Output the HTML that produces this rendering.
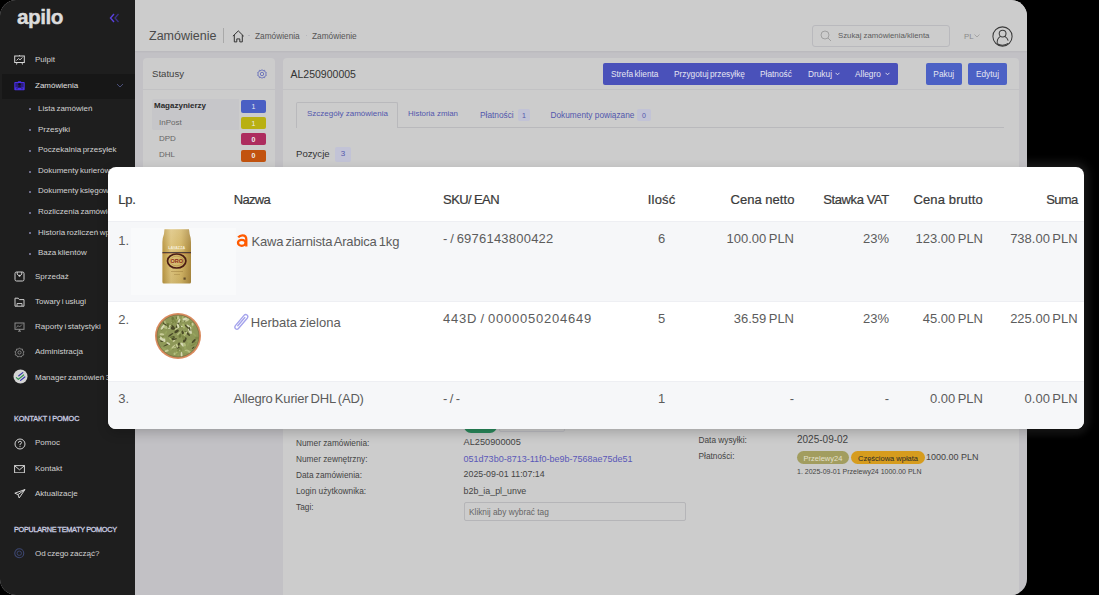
<!DOCTYPE html>
<html><head><meta charset="utf-8">
<style>
*{margin:0;padding:0;box-sizing:border-box}
html,body{width:1099px;height:595px;overflow:hidden;background:#000;font-family:"Liberation Sans",sans-serif}
.a{position:absolute}
.t{position:absolute;white-space:nowrap;line-height:1}
#frame{position:absolute;left:0;top:0;width:1027px;height:595px;border-radius:16px;overflow:hidden;background:#c2c1c5}
#side{position:absolute;left:0;top:0;width:135px;height:595px;background:#1e1e1e}
#side .t{color:#d2d2d2;font-size:8px;word-spacing:-0.7px}
#side .sub{left:38px}
#side .bul{position:absolute;left:29px;width:2px;height:2px;background:#6e6c8c}
#side .hd{color:#c9cce0;font-size:7.3px;left:14px;-webkit-text-stroke:0.3px #c9cce0;letter-spacing:-0.1px;word-spacing:-0.3px}
#head{position:absolute;left:135px;top:0;width:892px;height:50.5px;background:#cccccc;box-shadow:0 1px 1.5px rgba(0,0,0,0.05)}
.panel{position:absolute;background:#cccccc;border-radius:4px}
#card{position:absolute;left:108px;top:167px;width:976px;height:262px;border-radius:8px;overflow:hidden;background:#fff;box-shadow:0 4px 12px rgba(0,0,0,.2)}
#card .row{position:absolute;left:0;width:976px}
#card .th{position:absolute;white-space:nowrap;line-height:1;font-size:13px;color:#3a3a3a;-webkit-text-stroke:0.22px #3a3a3a;letter-spacing:-0.2px}
#card .td{position:absolute;white-space:nowrap;line-height:1;font-size:13px;color:#5c5c5c;letter-spacing:0;word-spacing:-1.2px}
.r{text-align:right}
</style></head><body>
<div id="frame">
  <div id="side">
    <div class="t" style="left:17px;top:6.8px;font-size:20.8px;font-weight:bold;color:#dcdcdc;letter-spacing:-0.5px;-webkit-text-stroke:0.4px #dcdcdc">apilo</div>
    <svg class="a" style="left:109px;top:13px" width="11" height="10" viewBox="0 0 11 10"><path d="M5 1 L1.5 5 L5 9" fill="none" stroke="#5a40e0" stroke-width="1.4"/><path d="M9.5 1 L6 5 L9.5 9" fill="none" stroke="#3a3188" stroke-width="1.3"/></svg>
    <!-- Pulpit -->
    <svg class="a" style="left:14px;top:55px" width="11" height="10" viewBox="0 0 11 10"><rect x="0.7" y="1" width="9.6" height="6.5" fill="none" stroke="#d8d8d8" stroke-width="1"/><path d="M2.5 5.5 L4.5 3.5 L6 4.8 L8.5 2.5" fill="none" stroke="#d8d8d8" stroke-width="0.9"/><path d="M3 7.5 L2.5 9.5 M8 7.5 L8.5 9.5 M5.5 0 V1" stroke="#d8d8d8" stroke-width="0.9"/></svg>
    <div class="t" style="left:35px;top:55.8px">Pulpit</div>
    <div class="a" style="left:2px;top:73.7px;width:133px;height:25px;background:#171717"></div>
    <svg class="a" style="left:14px;top:81px" width="11" height="9.5" viewBox="0 0 11 9.5"><rect x="0.3" y="1" width="10.4" height="8.3" rx="0.8" fill="#4a30e6"/><rect x="1.3" y="2" width="8.4" height="4.4" fill="#2a1c80"/><circle cx="5.5" cy="3.4" r="1.3" fill="#101010"/><path d="M3.3 6.6 Q5.5 3.8 7.7 6.6 Z" fill="#101010"/><rect x="3.8" y="0.2" width="3.4" height="1.3" rx="0.5" fill="#4a30e6"/><rect x="2" y="7.4" width="2" height="0.8" fill="#2a1c80"/><rect x="7" y="7.4" width="2" height="0.8" fill="#2a1c80"/></svg>
    <div class="t" style="left:35px;top:81.5px;color:#e0e0e0">Zamówienia</div>
    <svg class="a" style="left:116px;top:83px" width="8" height="5" viewBox="0 0 8 5"><path d="M1 1 L4 4 L7 1" fill="none" stroke="#4a4f7a" stroke-width="1"/></svg>
    <div class="bul" style="top:108px"></div><div class="t sub" style="top:104.7px">Lista zamówień</div>
    <div class="bul" style="top:129px"></div><div class="t sub" style="top:125.5px">Przesyłki</div>
    <div class="bul" style="top:150px"></div><div class="t sub" style="top:146.4px">Poczekalnia przesyłek</div>
    <div class="bul" style="top:170.5px"></div><div class="t sub" style="top:167.1px">Dokumenty kurierów</div>
    <div class="bul" style="top:191px"></div><div class="t sub" style="top:187.4px">Dokumenty księgowe</div>
    <div class="bul" style="top:211.5px"></div><div class="t sub" style="top:208.1px">Rozliczenia zamówień</div>
    <div class="bul" style="top:232px"></div><div class="t sub" style="top:228.7px">Historia rozliczeń wpłat</div>
    <div class="bul" style="top:253px"></div><div class="t sub" style="top:249.4px">Baza klientów</div>
    <!-- icons -->
    <svg class="a" style="left:14px;top:271px" width="11" height="11" viewBox="0 0 11 11"><path d="M1 2.5 Q1 1 2.5 1 H8.5 Q10 1 10 2.5 V8.5 Q10 10 8.5 10 H2.5 Q1 10 1 8.5 Z" fill="none" stroke="#cfcfcf" stroke-width="1"/><path d="M3.2 1 V3 Q5.5 6.6 7.8 3 V1" fill="none" stroke="#cfcfcf" stroke-width="1"/><circle cx="5.5" cy="4.8" r="1" fill="#cfcfcf"/></svg>
    <svg class="a" style="left:14px;top:297px" width="11" height="10" viewBox="0 0 11 10"><path d="M1 1.2 H4.2 L5.4 2.6 H10 V9.2 H1 Z" fill="none" stroke="#cfcfcf" stroke-width="1"/><path d="M3 9 V6.5 H8 V9" fill="none" stroke="#cfcfcf" stroke-width="0.9"/></svg>
    <svg class="a" style="left:14px;top:321.5px" width="11" height="10" viewBox="0 0 11 10"><rect x="1" y="1" width="9" height="6.3" fill="none" stroke="#8c8c8c" stroke-width="1"/><path d="M2.5 5.5 L4 3.5 L5.5 5 L8 2.5" fill="none" stroke="#8c8c8c" stroke-width="0.8"/><path d="M4 9.2 H7 M5.5 7.3 V9" stroke="#8c8c8c" stroke-width="1"/></svg>
    <svg class="a" style="left:14px;top:346.5px" width="11" height="11" viewBox="0 0 11 11"><circle cx="5.5" cy="5.5" r="1.6" fill="none" stroke="#8a8a8a" stroke-width="0.9"/><path d="M5.5 0.8 L6.6 2.2 L8.4 2 L8.6 3.8 L10.1 4.7 L9.2 6.2 L9.8 7.9 L8.1 8.4 L7.3 10 L5.5 9.3 L3.7 10 L2.9 8.4 L1.2 7.9 L1.8 6.2 L0.9 4.7 L2.4 3.8 L2.6 2 L4.4 2.2 Z" fill="none" stroke="#8a8a8a" stroke-width="0.9"/></svg>
    <svg class="a" style="left:12.6px;top:369px" width="15" height="15" viewBox="0 0 15 15"><circle cx="7.5" cy="7.5" r="7" fill="#d4d4d4"/><path d="M5.8 6.8 L9.8 3.6" fill="none" stroke="#3436a8" stroke-width="1.2" stroke-linecap="round"/><path d="M3.4 8.6 L5.3 10.4 L10.6 6" fill="none" stroke="#2f8f50" stroke-width="1.2" stroke-linecap="round" stroke-linejoin="round"/><path d="M7.6 11.4 L11.8 8" fill="none" stroke="#3436a8" stroke-width="1.2" stroke-linecap="round"/></svg>
    <svg class="a" style="left:13.5px;top:438px" width="12" height="12" viewBox="0 0 12 12"><circle cx="6" cy="6" r="5" fill="none" stroke="#d2d2d2" stroke-width="1"/><path d="M4.4 4.8 Q4.4 3.2 6 3.2 Q7.6 3.2 7.6 4.6 Q7.6 5.6 6 6.2 V7.2" fill="none" stroke="#d2d2d2" stroke-width="1"/><circle cx="6" cy="8.6" r="0.6" fill="#d2d2d2"/></svg>
    <svg class="a" style="left:14px;top:464.5px" width="11" height="8.5" viewBox="0 0 11 8.5"><rect x="0.6" y="0.6" width="9.8" height="7.2" fill="none" stroke="#d2d2d2" stroke-width="1"/><path d="M0.8 0.9 L5.5 4.8 L10.2 0.9" fill="none" stroke="#d2d2d2" stroke-width="1"/></svg>
    <svg class="a" style="left:14px;top:488.5px" width="11.5" height="9.5" viewBox="0 0 11.5 9.5"><path d="M11 0.5 L0.8 4.2 L4 5.6 L5.2 9 L11 0.5 Z M4 5.6 L11 0.5" fill="none" stroke="#d2d2d2" stroke-width="1" stroke-linejoin="round"/></svg>
    <svg class="a" style="left:14px;top:548.3px" width="10.5" height="10.5" viewBox="0 0 10.5 10.5"><circle cx="5.25" cy="5.25" r="4.5" fill="none" stroke="#3c4670" stroke-width="1.1"/><circle cx="5.25" cy="5.25" r="2.2" fill="none" stroke="#3c4670" stroke-width="1"/></svg>
    <div class="t" style="left:35px;top:272.5px">Sprzedaż</div>
    <div class="t" style="left:35px;top:298px">Towary i usługi</div>
    <div class="t" style="left:35px;top:322.8px">Raporty i statystyki</div>
    <div class="t" style="left:35px;top:348px">Administracja</div>
    <div class="t" style="left:35px;top:373.6px">Manager zamówień 3</div>
    <div class="t hd" style="top:415.1px">KONTAKT I POMOC</div>
    <div class="t" style="left:35px;top:439.3px">Pomoc</div>
    <div class="t" style="left:35px;top:464.7px">Kontakt</div>
    <div class="t" style="left:35px;top:489.9px">Aktualizacje</div>
    <div class="t hd" style="top:525.5px;letter-spacing:-0.3px">POPULARNE TEMATY POMOCY</div>
    <div class="t" style="left:35px;top:549.8px">Od czego zacząć?</div>
  </div>
  <div id="head">
    <div class="t" style="left:14px;top:30.2px;font-size:12.5px;color:#4a4a4a">Zamówienie</div>
    <div class="a" style="left:88px;top:28px;width:1px;height:15px;background:#a9a9a9"></div>
    <svg class="a" style="left:97px;top:29.5px" width="13" height="13" viewBox="0 0 13 13"><path d="M0.9 6.2 L6.3 0.9 L11.7 6.2 M2.3 5 V11.9 H4.8 V8.9 H7.8 V11.9 H10.3 V5" fill="none" stroke="#333" stroke-width="1" stroke-linejoin="miter"/></svg>
    <div class="a" style="left:113.3px;top:34.6px;width:1.8px;height:1.8px;border-radius:1px;background:#b0b0b8"></div>
    <div class="t" style="left:120px;top:32.3px;font-size:8.3px;color:#555">Zamówienia</div>
    <div class="a" style="left:170.6px;top:34.6px;width:1.8px;height:1.8px;border-radius:1px;background:#b0b0b8"></div>
    <div class="t" style="left:177px;top:32.3px;font-size:8.3px;color:#555">Zamówienie</div>
    <div class="a" style="left:677px;top:25px;width:138px;height:22px;border:1px solid #b9b9bd;border-radius:3px"></div>
    <svg class="a" style="left:685px;top:30px" width="12" height="12" viewBox="0 0 12 12"><circle cx="5" cy="5" r="4" fill="none" stroke="#9a9a9a" stroke-width="0.9"/><path d="M8 8 L11 11" stroke="#9a9a9a" stroke-width="0.9"/></svg>
    <div class="t" style="left:703px;top:32.3px;font-size:7.8px;color:#5c5c5c">Szukaj zamówienia/klienta</div>
    <div class="t" style="left:829px;top:32.5px;font-size:7.8px;color:#8a8a8a">PL</div>
    <svg class="a" style="left:839px;top:34.3px" width="6" height="4" viewBox="0 0 6 4"><path d="M0.5 0.5 L3 3 L5.5 0.5" fill="none" stroke="#9a9a9a" stroke-width="0.8"/></svg>
    <svg class="a" style="left:857px;top:26px" width="21" height="21" viewBox="0 0 21 21"><circle cx="10.5" cy="10.5" r="9.6" fill="none" stroke="#3a3a3a" stroke-width="1.05"/><circle cx="10.6" cy="7.6" r="3.4" fill="none" stroke="#3a3a3a" stroke-width="1.05"/><path d="M5.2 17.8 Q4.6 12.8 8.4 10.4 M12.8 10.4 Q15.6 12.3 16.2 14.6" fill="none" stroke="#3a3a3a" stroke-width="1.05"/><path d="M5.2 17.8 Q10.5 21 16.2 17.4" fill="none" stroke="#3a3a3a" stroke-width="1.05"/></svg>
  </div>
  <!-- statusy panel -->
  <div class="panel" style="left:143px;top:58px;width:132px;height:140px">
    <div class="a" style="left:0;top:31px;width:132px;height:1px;background:#c2c2c4"></div>
    <div class="t" style="left:9px;top:10.5px;font-size:9.6px;color:#3f3f3f">Statusy</div>
    <svg class="a" style="left:114px;top:11px" width="10" height="10" viewBox="0 0 10 10"><circle cx="5" cy="5" r="1.7" fill="none" stroke="#5a63b8" stroke-width="0.8"/><path d="M5 0.6 L6 1.8 L7.6 1.3 L7.9 2.9 L9.4 3.6 L8.7 5 L9.4 6.4 L7.9 7.1 L7.6 8.7 L6 8.2 L5 9.4 L4 8.2 L2.4 8.7 L2.1 7.1 L0.6 6.4 L1.3 5 L0.6 3.6 L2.1 2.9 L2.4 1.3 L4 1.8 Z" fill="none" stroke="#5a63b8" stroke-width="0.8"/></svg>
    <div class="a" style="left:9px;top:41.3px;width:87px;height:31px;background:#c6c6c9;border-radius:2px 0 0 2px"></div>
    <div class="t" style="left:11px;top:44px;font-size:8px;font-weight:bold;color:#2a2a2a">Magazynierzy</div>
    <div class="a" style="left:98px;top:42px;width:25px;height:12.5px;background:#4a5fc4;border-radius:2px"></div>
    <div class="t" style="left:98px;top:45px;width:25px;text-align:center;font-size:7px;color:#e8e8ee">1</div>
    <div class="t" style="left:16px;top:60.5px;font-size:8px;color:#666">InPost</div>
    <div class="a" style="left:98px;top:59px;width:25px;height:12px;background:#b9b012;border-radius:2px"></div>
    <div class="t" style="left:98px;top:61.5px;width:25px;text-align:center;font-size:7px;color:#eee">1</div>
    <div class="t" style="left:16px;top:76.5px;font-size:8px;color:#666">DPD</div>
    <div class="a" style="left:98px;top:75px;width:25px;height:12px;background:#ad2c5e;border-radius:2px"></div>
    <div class="t" style="left:98px;top:77.5px;width:25px;text-align:center;font-size:7px;font-weight:bold;color:#eee">0</div>
    <div class="t" style="left:16px;top:93px;font-size:8px;color:#666">DHL</div>
    <div class="a" style="left:98px;top:91.8px;width:25px;height:12px;background:#c2530f;border-radius:2px"></div>
    <div class="t" style="left:98px;top:94.3px;width:25px;text-align:center;font-size:7px;font-weight:bold;color:#eee">0</div>
  </div>
  <!-- main panel -->
  <div class="panel" style="left:283px;top:58px;width:736px;height:560px">
    <div class="a" style="left:0;top:31px;width:736px;height:1px;background:#c2c2c4"></div>
    <div class="t" style="left:7.5px;top:10.5px;font-size:10.5px;color:#333">AL250900005</div>
    <div class="a" style="left:320px;top:5px;width:294.5px;height:21.5px;background:#4a51ba;border-radius:2px"></div>
    <div class="t" style="left:328px;top:11.8px;font-size:8.3px;color:#e6e6f2;word-spacing:-1px">Strefa klienta</div>
    <div class="t" style="left:391px;top:11.8px;font-size:8.3px;color:#e6e6f2;word-spacing:-1px">Przygotuj przesyłkę</div>
    <div class="t" style="left:477px;top:11.8px;font-size:8.3px;color:#e6e6f2">Płatność</div>
    <div class="t" style="left:525px;top:11.8px;font-size:8.3px;color:#e6e6f2">Drukuj</div>
    <svg class="a" style="left:552px;top:14px" width="5" height="4" viewBox="0 0 5 4"><path d="M0.5 0.8 L2.5 2.8 L4.5 0.8" fill="none" stroke="#e6e6f2" stroke-width="0.9"/></svg>
    <div class="t" style="left:572px;top:11.8px;font-size:8.3px;color:#e6e6f2">Allegro</div>
    <svg class="a" style="left:602px;top:14px" width="5" height="4" viewBox="0 0 5 4"><path d="M0.5 0.8 L2.5 2.8 L4.5 0.8" fill="none" stroke="#e6e6f2" stroke-width="0.9"/></svg>
    <div class="a" style="left:643px;top:5px;width:35.5px;height:21.5px;background:#4c61c5;border-radius:2px"></div>
    <div class="t" style="left:643px;top:11.8px;width:35.5px;text-align:center;font-size:8.3px;color:#e6e6f2">Pakuj</div>
    <div class="a" style="left:685px;top:5px;width:39px;height:21.5px;background:#4c61c5;border-radius:2px"></div>
    <div class="t" style="left:685px;top:11.8px;width:39px;text-align:center;font-size:8.3px;color:#e6e6f2">Edytuj</div>
    <!-- tabs -->
    <div class="a" style="left:13px;top:69px;width:708px;height:1px;background:#b9b9bc"></div>
    <div class="a" style="left:13px;top:44px;width:102px;height:26px;border:1px solid #b9b9bc;border-bottom:none;background:#cccccc;border-radius:2px 2px 0 0"></div>
    <div class="t" style="left:24px;top:51.5px;font-size:8px;color:#5257ad">Szczegóły zamówienia</div>
    <div class="t" style="left:125px;top:51.5px;font-size:7.9px;color:#5257ad">Historia zmian</div>
    <div class="t" style="left:197px;top:52.5px;font-size:8.3px;color:#5257ad">Płatności</div>
    <div class="a" style="left:235px;top:51px;width:12px;height:12px;background:#c2c3d6;border-radius:2px"></div>
    <div class="t" style="left:235px;top:53.5px;width:12px;text-align:center;font-size:7px;color:#5257ad">1</div>
    <div class="t" style="left:267.5px;top:52.5px;font-size:8.3px;color:#5257ad">Dokumenty powiązane</div>
    <div class="a" style="left:354px;top:51px;width:14px;height:12px;background:#c2c3d6;border-radius:2px"></div>
    <div class="t" style="left:354px;top:53.5px;width:14px;text-align:center;font-size:7px;color:#5257ad">0</div>
    <div class="t" style="left:13px;top:91px;font-size:9.6px;color:#333">Pozycje</div>
    <div class="a" style="left:52px;top:88.7px;width:16px;height:15px;background:#c2c3d6;border-radius:2px"></div>
    <div class="t" style="left:52px;top:92px;width:16px;text-align:center;font-size:8px;color:#5257ad">3</div>
    <!-- detail lower -->
    <div class="a" style="left:181px;top:361px;width:33px;height:14px;background:#2a8a5c;border-radius:7px"></div>
    <div class="a" style="left:216px;top:360px;width:66px;height:14px;border:1px solid #bdbdc2;border-radius:2px"></div>
    <div class="t" style="left:13px;top:380.5px;font-size:8.3px;color:#444">Numer zamówienia:</div>
    <div class="t" style="left:13px;top:396.5px;font-size:8.3px;color:#444">Numer zewnętrzny:</div>
    <div class="t" style="left:13px;top:412.5px;font-size:8.3px;color:#444">Data zamówienia:</div>
    <div class="t" style="left:13px;top:429px;font-size:8.3px;color:#444">Login użytkownika:</div>
    <div class="t" style="left:13px;top:444.5px;font-size:8.3px;color:#444">Tagi:</div>
    <div class="t" style="left:180.6px;top:380px;font-size:9.2px;color:#444">AL250900005</div>
    <div class="t" style="left:180.6px;top:396.5px;font-size:9px;color:#5a58b8">051d73b0-8713-11f0-be9b-7568ae75de51</div>
    <div class="t" style="left:180.6px;top:412px;font-size:8.8px;color:#444">2025-09-01 11:07:14</div>
    <div class="t" style="left:180.6px;top:428.5px;font-size:8.9px;color:#444">b2b_ia_pl_unve</div>
    <div class="a" style="left:180.6px;top:444.3px;width:222px;height:18.5px;border:1px solid #b5b5b8;border-radius:2px"></div>
    <div class="t" style="left:186px;top:449.5px;font-size:8.3px;color:#666">Kliknij aby wybrać tag</div>
    <div class="t" style="left:415.5px;top:378px;font-size:8.3px;color:#444">Data wysyłki:</div>
    <div class="t" style="left:415.5px;top:394px;font-size:8.3px;color:#444">Płatności:</div>
    <div class="t" style="left:514px;top:377px;font-size:10px;color:#444">2025-09-02</div>
    <div class="a" style="left:514px;top:393.2px;width:52px;height:13.3px;background:#a29d5f;border-radius:7px"></div>
    <div class="t" style="left:514px;top:396.5px;width:52px;text-align:center;font-size:7.5px;color:#e2e0cc">Przelewy24</div>
    <div class="a" style="left:568px;top:393.2px;width:74px;height:13.3px;background:#d69c1e;border-radius:7px"></div>
    <div class="t" style="left:568px;top:396.5px;width:74px;text-align:center;font-size:7.5px;color:#2a2a2a">Częściowa wpłata</div>
    <div class="t" style="left:643px;top:394.5px;font-size:9px;color:#444">1000.00 PLN</div>
    <div class="t" style="left:514px;top:409.5px;font-size:7px;color:#444">1. 2025-09-01 Przelewy24 1000.00 PLN</div>
  </div>

</div>
<div class="a" style="left:1027px;top:0;width:72px;height:595px;overflow:hidden"><div class="a" style="left:-919px;top:167px;width:976px;height:262px;border-radius:8px;box-shadow:0 0 9px 5px rgba(50,50,50,0.5)"></div></div>
<div id="card">
  <div class="row" style="top:54.3px;height:1px;background:#eeeff3"></div><div class="row" style="top:55.3px;height:78.5px;background:#f6f7f9"></div><div class="row" style="top:133.6px;height:1px;background:#eeeff3"></div>
  <div class="row" style="top:214.3px;height:1px;background:#eeeff3"></div><div class="row" style="top:215.3px;height:47px;background:#f6f7f9"></div>
  <div class="th" style="left:10.2px;top:26.1px">Lp.</div>
  <div class="th" style="left:125.8px;top:26.1px;letter-spacing:-0.7px">Nazwa</div>
  <div class="th" style="left:335.1px;top:26.1px;letter-spacing:-0.6px">SKU/ EAN</div>
  <div class="th" style="left:539.8px;top:26.1px;letter-spacing:0.17px">Ilość</div>
  <div class="th r" style="right:289.6px;top:26.1px;letter-spacing:0.03px">Cena netto</div>
  <div class="th r" style="right:195.1px;top:26.1px;letter-spacing:-0.4px">Stawka VAT</div>
  <div class="th r" style="right:101.2px;top:26.1px;letter-spacing:0.13px">Cena brutto</div>
  <div class="th r" style="right:6.4px;top:26.1px;letter-spacing:-0.63px">Suma</div>
  <div class="a" style="left:22.5px;top:61.3px;width:105px;height:67px;background:#f9fafb"></div>
  <!-- images -->
  <svg class="a" style="left:53px;top:61px" width="32" height="56" viewBox="0 0 32 56">
    <defs><linearGradient id="gb" x1="0" x2="1" y1="0" y2="0"><stop offset="0" stop-color="#b89440"/><stop offset="0.3" stop-color="#dcc27a"/><stop offset="0.65" stop-color="#d2b464"/><stop offset="1" stop-color="#a8863c"/></linearGradient>
    <linearGradient id="gt" x1="0" x2="0" y1="0" y2="1"><stop offset="0" stop-color="#fff" stop-opacity="0.18"/><stop offset="0.4" stop-color="#fff" stop-opacity="0"/><stop offset="1" stop-color="#000" stop-opacity="0.05"/></linearGradient></defs>
    <path d="M3.5 1.2 H28 L28.6 6 Q30 10 30 14 V54 Q30 55.6 28.6 55.6 H3 Q1.4 55.6 1.4 54 V14 Q1.4 10 3 6 Z" fill="url(#gb)"/>
    <path d="M3.5 1.2 H28 L28.6 6 Q30 10 30 14 V54 Q30 55.6 28.6 55.6 H3 Q1.4 55.6 1.4 54 V14 Q1.4 10 3 6 Z" fill="url(#gt)"/>
    <text x="15.7" y="20.6" text-anchor="middle" font-family="Liberation Sans" font-weight="bold" font-size="3.6" fill="#f6f0de" letter-spacing="0.1">LAVAZZA</text>
    <rect x="8" y="21.6" width="15.5" height="0.6" fill="#efe4c6" opacity="0.6"/>
    <rect x="1.4" y="24" width="28.6" height="1.1" fill="#2a2030" opacity="0.75"/>
    <rect x="1.4" y="25.1" width="28.6" height="0.5" fill="#9a3020" opacity="0.5"/>
    <ellipse cx="15.7" cy="33" rx="9.2" ry="7" fill="none" stroke="#4a1c14" stroke-width="1.7"/>
    <ellipse cx="15.7" cy="33" rx="6.8" ry="4.8" fill="none" stroke="#b08a40" stroke-width="0.6"/>
    <text x="15.7" y="35" text-anchor="middle" font-family="Liberation Sans" font-weight="bold" font-size="5.5" fill="#8e2a18">ORO</text>
    <rect x="10" y="43" width="12" height="0.7" fill="#8a6a30" opacity="0.55"/>
    <rect x="13" y="46" width="6" height="0.7" fill="#8a6a30" opacity="0.45"/>
    <rect x="22.5" y="49.5" width="2.2" height="2.2" fill="#3a2a1a" opacity="0.7"/>
  </svg>
  <svg class="a" style="left:46px;top:145px" width="48" height="48" viewBox="0 0 48 48">
    <defs><clipPath id="tc"><circle cx="24" cy="24" r="20.9"/></clipPath></defs>
    <circle cx="24" cy="24" r="23" fill="#d98b5e"/>
    <circle cx="24" cy="24" r="21" fill="#8e9858"/>
    <g clip-path="url(#tc)"><ellipse cx="30.5" cy="33.0" rx="2.5" ry="0.7" transform="rotate(96 30.5 33.0)" fill="#a9b66a"/><ellipse cx="36.6" cy="16.0" rx="1.6" ry="0.7" transform="rotate(75 36.6 16.0)" fill="#d6d9b4"/><ellipse cx="18.8" cy="26.7" rx="2.9" ry="0.7" transform="rotate(40 18.8 26.7)" fill="#6e7a3c"/><ellipse cx="12.2" cy="33.0" rx="3.2" ry="0.6" transform="rotate(155 12.2 33.0)" fill="#4a4a28"/><ellipse cx="11.8" cy="20.8" rx="2.3" ry="1.0" transform="rotate(123 11.8 20.8)" fill="#97a45e"/><ellipse cx="14.4" cy="12.6" rx="1.9" ry="1.0" transform="rotate(11 14.4 12.6)" fill="#6e7a3c"/><ellipse cx="8.7" cy="24.3" rx="2.3" ry="1.2" transform="rotate(84 8.7 24.3)" fill="#7f8a48"/><ellipse cx="24.1" cy="35.7" rx="1.6" ry="1.2" transform="rotate(15 24.1 35.7)" fill="#4a4a28"/><ellipse cx="34.0" cy="14.0" rx="2.7" ry="0.8" transform="rotate(176 34.0 14.0)" fill="#97a45e"/><ellipse cx="31.1" cy="36.0" rx="1.9" ry="1.3" transform="rotate(76 31.1 36.0)" fill="#97a45e"/><ellipse cx="8.7" cy="16.4" rx="3.0" ry="0.9" transform="rotate(125 8.7 16.4)" fill="#7f8a48"/><ellipse cx="9.7" cy="28.0" rx="2.9" ry="1.4" transform="rotate(85 9.7 28.0)" fill="#97a45e"/><ellipse cx="22.6" cy="19.4" rx="2.5" ry="1.4" transform="rotate(148 22.6 19.4)" fill="#4a4a28"/><ellipse cx="36.5" cy="13.2" rx="1.9" ry="1.4" transform="rotate(64 36.5 13.2)" fill="#97a45e"/><ellipse cx="26.7" cy="37.4" rx="1.8" ry="1.2" transform="rotate(72 26.7 37.4)" fill="#7f8a48"/><ellipse cx="18.7" cy="25.7" rx="2.3" ry="1.3" transform="rotate(147 18.7 25.7)" fill="#4a4a28"/><ellipse cx="40.3" cy="22.6" rx="2.6" ry="0.9" transform="rotate(42 40.3 22.6)" fill="#97a45e"/><ellipse cx="24.9" cy="32.1" rx="1.7" ry="1.0" transform="rotate(106 24.9 32.1)" fill="#4a4a28"/><ellipse cx="30.3" cy="32.2" rx="2.3" ry="1.1" transform="rotate(57 30.3 32.2)" fill="#b5bf80"/><ellipse cx="7.9" cy="22.4" rx="2.4" ry="1.1" transform="rotate(10 7.9 22.4)" fill="#c8cc98"/><ellipse cx="14.3" cy="31.6" rx="2.2" ry="0.9" transform="rotate(34 14.3 31.6)" fill="#d6d9b4"/><ellipse cx="34.0" cy="32.2" rx="2.4" ry="0.7" transform="rotate(102 34.0 32.2)" fill="#97a45e"/><ellipse cx="9.7" cy="11.6" rx="1.3" ry="0.8" transform="rotate(68 9.7 11.6)" fill="#4a4a28"/><ellipse cx="8.7" cy="12.6" rx="2.1" ry="0.7" transform="rotate(88 8.7 12.6)" fill="#7f8a48"/><ellipse cx="18.9" cy="36.5" rx="1.5" ry="1.2" transform="rotate(133 18.9 36.5)" fill="#7f8a48"/><ellipse cx="33.4" cy="39.1" rx="1.2" ry="1.4" transform="rotate(95 33.4 39.1)" fill="#b5bf80"/><ellipse cx="37.9" cy="15.7" rx="2.7" ry="0.8" transform="rotate(116 37.9 15.7)" fill="#97a45e"/><ellipse cx="22.9" cy="40.2" rx="1.9" ry="0.7" transform="rotate(139 22.9 40.2)" fill="#a9b66a"/><ellipse cx="12.2" cy="13.8" rx="2.8" ry="1.2" transform="rotate(35 12.2 13.8)" fill="#d6d9b4"/><ellipse cx="22.9" cy="6.4" rx="1.7" ry="1.0" transform="rotate(64 22.9 6.4)" fill="#6e7a3c"/><ellipse cx="28.8" cy="5.2" rx="2.1" ry="0.8" transform="rotate(109 28.8 5.2)" fill="#a9b66a"/><ellipse cx="36.0" cy="19.0" rx="3.2" ry="1.4" transform="rotate(66 36.0 19.0)" fill="#d6d9b4"/><ellipse cx="17.9" cy="25.2" rx="1.9" ry="1.0" transform="rotate(177 17.9 25.2)" fill="#6e7a3c"/><ellipse cx="16.3" cy="12.9" rx="2.8" ry="0.7" transform="rotate(119 16.3 12.9)" fill="#c8cc98"/><ellipse cx="24.0" cy="6.8" rx="2.2" ry="0.7" transform="rotate(142 24.0 6.8)" fill="#a9b66a"/><ellipse cx="29.4" cy="22.1" rx="2.6" ry="1.0" transform="rotate(134 29.4 22.1)" fill="#97a45e"/><ellipse cx="32.0" cy="38.5" rx="1.5" ry="0.7" transform="rotate(163 32.0 38.5)" fill="#b5bf80"/><ellipse cx="11.4" cy="15.4" rx="2.1" ry="1.3" transform="rotate(28 11.4 15.4)" fill="#b5bf80"/><ellipse cx="24.9" cy="21.3" rx="2.7" ry="0.7" transform="rotate(135 24.9 21.3)" fill="#b5bf80"/><ellipse cx="32.9" cy="14.7" rx="2.9" ry="0.8" transform="rotate(45 32.9 14.7)" fill="#4a4a28"/><ellipse cx="25.2" cy="10.2" rx="1.9" ry="1.0" transform="rotate(150 25.2 10.2)" fill="#6e7a3c"/><ellipse cx="12.7" cy="38.8" rx="2.1" ry="1.1" transform="rotate(163 12.7 38.8)" fill="#c8cc98"/><ellipse cx="36.8" cy="11.7" rx="1.5" ry="0.7" transform="rotate(92 36.8 11.7)" fill="#7f8a48"/><ellipse cx="10.7" cy="13.2" rx="2.8" ry="0.7" transform="rotate(25 10.7 13.2)" fill="#97a45e"/><ellipse cx="17.3" cy="36.9" rx="2.2" ry="1.0" transform="rotate(141 17.3 36.9)" fill="#97a45e"/><ellipse cx="41.2" cy="30.4" rx="1.6" ry="0.6" transform="rotate(18 41.2 30.4)" fill="#7f8a48"/><ellipse cx="24.9" cy="9.4" rx="3.0" ry="1.0" transform="rotate(110 24.9 9.4)" fill="#d6d9b4"/><ellipse cx="8.5" cy="28.8" rx="2.3" ry="1.0" transform="rotate(169 8.5 28.8)" fill="#4a4a28"/><ellipse cx="38.6" cy="12.3" rx="1.6" ry="1.0" transform="rotate(75 38.6 12.3)" fill="#c8cc98"/><ellipse cx="35.6" cy="29.7" rx="1.7" ry="0.7" transform="rotate(121 35.6 29.7)" fill="#97a45e"/><ellipse cx="34.4" cy="39.2" rx="2.6" ry="1.1" transform="rotate(26 34.4 39.2)" fill="#b5bf80"/><ellipse cx="27.6" cy="42.8" rx="3.1" ry="0.9" transform="rotate(88 27.6 42.8)" fill="#d6d9b4"/><ellipse cx="16.9" cy="27.3" rx="2.2" ry="0.9" transform="rotate(35 16.9 27.3)" fill="#a9b66a"/><ellipse cx="20.1" cy="28.4" rx="1.9" ry="1.0" transform="rotate(127 20.1 28.4)" fill="#c8cc98"/><ellipse cx="16.0" cy="16.1" rx="2.2" ry="0.7" transform="rotate(177 16.0 16.1)" fill="#d6d9b4"/><ellipse cx="39.2" cy="35.8" rx="1.7" ry="0.6" transform="rotate(140 39.2 35.8)" fill="#4a4a28"/><ellipse cx="31.2" cy="8.7" rx="2.9" ry="1.1" transform="rotate(170 31.2 8.7)" fill="#c8cc98"/><ellipse cx="30.6" cy="20.3" rx="2.3" ry="1.2" transform="rotate(16 30.6 20.3)" fill="#6e7a3c"/><ellipse cx="31.1" cy="39.9" rx="3.0" ry="0.8" transform="rotate(3 31.1 39.9)" fill="#97a45e"/><ellipse cx="39.1" cy="32.8" rx="2.9" ry="0.7" transform="rotate(155 39.1 32.8)" fill="#7f8a48"/><ellipse cx="26.1" cy="23.9" rx="2.0" ry="1.3" transform="rotate(112 26.1 23.9)" fill="#6e7a3c"/><ellipse cx="25.0" cy="38.1" rx="1.4" ry="0.7" transform="rotate(9 25.0 38.1)" fill="#d6d9b4"/><ellipse cx="11.0" cy="10.4" rx="2.3" ry="0.8" transform="rotate(80 11.0 10.4)" fill="#b5bf80"/><ellipse cx="27.4" cy="14.4" rx="3.2" ry="0.6" transform="rotate(3 27.4 14.4)" fill="#d6d9b4"/><ellipse cx="24.4" cy="38.0" rx="2.1" ry="1.1" transform="rotate(117 24.4 38.0)" fill="#7f8a48"/><ellipse cx="35.0" cy="14.7" rx="3.1" ry="0.8" transform="rotate(39 35.0 14.7)" fill="#d6d9b4"/><ellipse cx="29.6" cy="14.1" rx="2.6" ry="1.1" transform="rotate(73 29.6 14.1)" fill="#a9b66a"/><ellipse cx="34.0" cy="7.5" rx="1.2" ry="1.1" transform="rotate(158 34.0 7.5)" fill="#c8cc98"/><ellipse cx="30.8" cy="28.0" rx="2.9" ry="1.3" transform="rotate(121 30.8 28.0)" fill="#4a4a28"/><ellipse cx="18.7" cy="9.9" rx="1.3" ry="0.7" transform="rotate(48 18.7 9.9)" fill="#6e7a3c"/><ellipse cx="33.7" cy="21.6" rx="3.1" ry="1.0" transform="rotate(44 33.7 21.6)" fill="#4a4a28"/><ellipse cx="27.7" cy="32.3" rx="1.9" ry="0.7" transform="rotate(50 27.7 32.3)" fill="#d6d9b4"/><ellipse cx="25.6" cy="14.4" rx="1.4" ry="1.3" transform="rotate(26 25.6 14.4)" fill="#6e7a3c"/><ellipse cx="20.2" cy="35.6" rx="2.5" ry="0.7" transform="rotate(172 20.2 35.6)" fill="#b5bf80"/><ellipse cx="20.6" cy="8.5" rx="3.0" ry="0.9" transform="rotate(59 20.6 8.5)" fill="#7f8a48"/><ellipse cx="22.8" cy="16.6" rx="2.5" ry="0.6" transform="rotate(150 22.8 16.6)" fill="#c8cc98"/><ellipse cx="30.4" cy="8.6" rx="1.5" ry="1.0" transform="rotate(91 30.4 8.6)" fill="#6e7a3c"/><ellipse cx="8.7" cy="15.1" rx="3.0" ry="1.1" transform="rotate(125 8.7 15.1)" fill="#d6d9b4"/><ellipse cx="29.5" cy="25.5" rx="2.5" ry="1.4" transform="rotate(68 29.5 25.5)" fill="#7f8a48"/><ellipse cx="13.9" cy="13.5" rx="2.5" ry="1.1" transform="rotate(88 13.9 13.5)" fill="#6e7a3c"/><ellipse cx="35.9" cy="29.6" rx="3.1" ry="1.3" transform="rotate(17 35.9 29.6)" fill="#97a45e"/><ellipse cx="7.4" cy="26.8" rx="2.8" ry="1.3" transform="rotate(42 7.4 26.8)" fill="#d6d9b4"/><ellipse cx="18.5" cy="16.4" rx="2.1" ry="1.3" transform="rotate(14 18.5 16.4)" fill="#4a4a28"/><ellipse cx="11.3" cy="12.5" rx="2.5" ry="0.7" transform="rotate(27 11.3 12.5)" fill="#4a4a28"/><ellipse cx="18.5" cy="9.3" rx="2.4" ry="0.7" transform="rotate(87 18.5 9.3)" fill="#7f8a48"/><ellipse cx="19.2" cy="15.1" rx="2.6" ry="1.1" transform="rotate(52 19.2 15.1)" fill="#4a4a28"/><ellipse cx="11.0" cy="26.8" rx="1.4" ry="1.3" transform="rotate(36 11.0 26.8)" fill="#97a45e"/><ellipse cx="42.8" cy="26.1" rx="2.1" ry="1.3" transform="rotate(174 42.8 26.1)" fill="#7f8a48"/><ellipse cx="9.3" cy="36.7" rx="3.0" ry="1.3" transform="rotate(13 9.3 36.7)" fill="#97a45e"/><ellipse cx="16.7" cy="22.9" rx="3.1" ry="0.7" transform="rotate(148 16.7 22.9)" fill="#4a4a28"/><ellipse cx="18.7" cy="6.4" rx="1.7" ry="1.3" transform="rotate(88 18.7 6.4)" fill="#6e7a3c"/><ellipse cx="31.4" cy="21.6" rx="2.6" ry="0.9" transform="rotate(131 31.4 21.6)" fill="#c8cc98"/><ellipse cx="19.4" cy="34.5" rx="2.9" ry="0.6" transform="rotate(135 19.4 34.5)" fill="#c8cc98"/><ellipse cx="30.0" cy="21.0" rx="2.6" ry="1.3" transform="rotate(52 30.0 21.0)" fill="#a9b66a"/><ellipse cx="20.2" cy="27.2" rx="2.9" ry="0.7" transform="rotate(167 20.2 27.2)" fill="#4a4a28"/><ellipse cx="20.6" cy="41.7" rx="1.3" ry="1.1" transform="rotate(114 20.6 41.7)" fill="#b5bf80"/><ellipse cx="23.0" cy="33.7" rx="2.2" ry="0.8" transform="rotate(67 23.0 33.7)" fill="#c8cc98"/><ellipse cx="31.0" cy="7.0" rx="2.5" ry="1.3" transform="rotate(169 31.0 7.0)" fill="#d6d9b4"/><ellipse cx="39.7" cy="29.1" rx="2.7" ry="1.0" transform="rotate(135 39.7 29.1)" fill="#4a4a28"/><ellipse cx="35.6" cy="16.9" rx="2.3" ry="0.7" transform="rotate(75 35.6 16.9)" fill="#4a4a28"/><ellipse cx="23.3" cy="13.4" rx="3.2" ry="0.8" transform="rotate(118 23.3 13.4)" fill="#4a4a28"/><ellipse cx="17.4" cy="12.2" rx="1.4" ry="1.1" transform="rotate(14 17.4 12.2)" fill="#7f8a48"/><ellipse cx="10.2" cy="28.2" rx="1.9" ry="1.2" transform="rotate(77 10.2 28.2)" fill="#d6d9b4"/><ellipse cx="28.4" cy="32.6" rx="2.3" ry="0.9" transform="rotate(66 28.4 32.6)" fill="#d6d9b4"/><ellipse cx="24.0" cy="5.6" rx="2.0" ry="0.9" transform="rotate(94 24.0 5.6)" fill="#c8cc98"/><ellipse cx="24.1" cy="13.9" rx="2.2" ry="1.1" transform="rotate(65 24.1 13.9)" fill="#d6d9b4"/><ellipse cx="28.7" cy="20.4" rx="2.0" ry="1.1" transform="rotate(78 28.7 20.4)" fill="#4a4a28"/><ellipse cx="36.5" cy="11.1" rx="1.2" ry="0.6" transform="rotate(128 36.5 11.1)" fill="#7f8a48"/><ellipse cx="4.9" cy="25.2" rx="1.3" ry="1.3" transform="rotate(167 4.9 25.2)" fill="#7f8a48"/><ellipse cx="24.2" cy="43.2" rx="1.4" ry="0.7" transform="rotate(94 24.2 43.2)" fill="#97a45e"/></g>
    <circle cx="24" cy="24" r="21" fill="none" stroke="#5e5a34" stroke-width="0.8" opacity="0.6"/>
  </svg>
  <svg class="a" style="left:128px;top:67px" width="12" height="13" viewBox="0 0 12 13"><path d="M2.2 3.4 Q3.8 1.3 6.4 1.3 Q10.3 1.3 10.3 5.3 V12.4" fill="none" stroke="#ff5a00" stroke-width="2.3"/><ellipse cx="5.8" cy="8.8" rx="3.8" ry="3" fill="none" stroke="#ff5a00" stroke-width="2.3"/></svg>
  <svg class="a" style="left:125px;top:145.5px" width="17" height="18" viewBox="0 0 17 18">
    <path d="M5.2 15.8 L14.2 5.2 Q15.6 3.4 14 2 Q12.4 0.8 11 2.4 L2.4 12.6 Q1.2 14.4 2.6 15.8 Q4 16.8 5.2 15.8 M11.8 4.5 L4.8 12.8" fill="none" stroke="#a5a4ec" stroke-width="1.4" stroke-linecap="round"/>
  </svg>
  <!-- row1 -->
  <div class="td" style="left:10.2px;top:66.5px">1.</div>
  <div class="td" style="left:143.4px;top:67.5px;letter-spacing:-0.18px">Kawa ziarnista Arabica 1kg</div>
  <div class="td" style="left:335px;top:64.7px;letter-spacing:0.22px">- / 6976143800422</div>
  <div class="td" style="left:550px;top:64.7px">6</div>
  <div class="td r" style="right:290px;top:64.7px">100.00 PLN</div>
  <div class="td r" style="right:195px;top:64.7px">23%</div>
  <div class="td r" style="right:101px;top:64.7px">123.00 PLN</div>
  <div class="td r" style="right:6.4px;top:64.7px">738.00 PLN</div>
  <!-- row2 -->
  <div class="td" style="left:10.2px;top:145.8px">2.</div>
  <div class="td" style="left:142.8px;top:148.7px">Herbata zielona</div>
  <div class="td" style="left:335px;top:145.2px;letter-spacing:0.78px">443D / 0000050204649</div>
  <div class="td" style="left:550px;top:145.2px">5</div>
  <div class="td r" style="right:290px;top:145.2px">36.59 PLN</div>
  <div class="td r" style="right:195px;top:145.2px">23%</div>
  <div class="td r" style="right:101px;top:145.2px">45.00 PLN</div>
  <div class="td r" style="right:6.4px;top:145.2px">225.00 PLN</div>
  <!-- row3 -->
  <div class="td" style="left:10.2px;top:225px">3.</div>
  <div class="td" style="left:125.5px;top:225px;letter-spacing:-0.19px">Allegro Kurier DHL (AD)</div>
  <div class="td" style="left:335px;top:225px">- / -</div>
  <div class="td" style="left:550px;top:225px">1</div>
  <div class="td r" style="right:290px;top:225px">-</div>
  <div class="td r" style="right:195px;top:225px">-</div>
  <div class="td r" style="right:101px;top:225px">0.00 PLN</div>
  <div class="td r" style="right:6.4px;top:225px">0.00 PLN</div>
</div>
</body></html>
